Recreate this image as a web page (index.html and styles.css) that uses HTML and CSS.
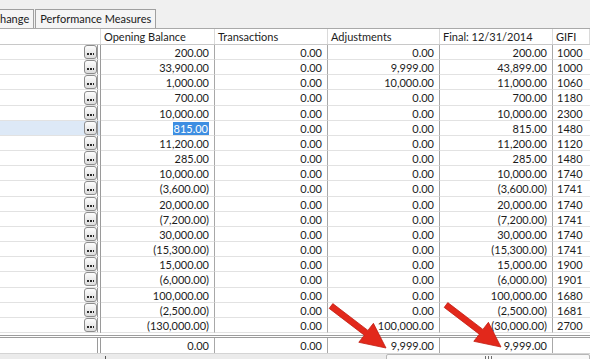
FILE: index.html
```html
<!DOCTYPE html>
<html lang="en">
<head>
    <meta charset="UTF-8" />
    <meta name="viewport" content="width=device-width, initial-scale=1.0" />
    <title>Trial Balance</title>
    <link rel="stylesheet" href="styles.css">
</head>
<body>
    <div class="window">
        <div class="tabs">
            <span class="tab tab-cut">hange</span>
            <span class="tab">Performance Measures</span>
        </div>

        <div class="grid-head">
            <div class="hcell"></div>
            <div class="hcell">Opening Balance</div>
            <div class="hcell">Transactions</div>
            <div class="hcell">Adjustments</div>
            <div class="hcell">Final: 12/31/2014</div>
            <div class="hcell">GIFI</div>
        </div>

        <div class="grid-body">
            <div class="row"><div class="cell first"><span class="dots"></span></div><div class="cell num">200.00</div><div class="cell num">0.00</div><div class="cell num">0.00</div><div class="cell num">200.00</div><div class="cell code">1000</div></div>
            <div class="row"><div class="cell first"><span class="dots"></span></div><div class="cell num">33,900.00</div><div class="cell num">0.00</div><div class="cell num">9,999.00</div><div class="cell num">43,899.00</div><div class="cell code">1000</div></div>
            <div class="row"><div class="cell first"><span class="dots"></span></div><div class="cell num">1,000.00</div><div class="cell num">0.00</div><div class="cell num">10,000.00</div><div class="cell num">11,000.00</div><div class="cell code">1060</div></div>
            <div class="row"><div class="cell first"><span class="dots"></span></div><div class="cell num">700.00</div><div class="cell num">0.00</div><div class="cell num">0.00</div><div class="cell num">700.00</div><div class="cell code">1180</div></div>
            <div class="row"><div class="cell first"><span class="dots"></span></div><div class="cell num">10,000.00</div><div class="cell num">0.00</div><div class="cell num">0.00</div><div class="cell num">10,000.00</div><div class="cell code">2300</div></div>
            <div class="row current"><div class="cell first"><span class="dots"></span></div><div class="cell num"><span class="selected">815.00</span></div><div class="cell num">0.00</div><div class="cell num">0.00</div><div class="cell num">815.00</div><div class="cell code">1480</div></div>
            <div class="row"><div class="cell first"><span class="dots"></span></div><div class="cell num">11,200.00</div><div class="cell num">0.00</div><div class="cell num">0.00</div><div class="cell num">11,200.00</div><div class="cell code">1120</div></div>
            <div class="row"><div class="cell first"><span class="dots"></span></div><div class="cell num">285.00</div><div class="cell num">0.00</div><div class="cell num">0.00</div><div class="cell num">285.00</div><div class="cell code">1480</div></div>
            <div class="row"><div class="cell first"><span class="dots"></span></div><div class="cell num">10,000.00</div><div class="cell num">0.00</div><div class="cell num">0.00</div><div class="cell num">10,000.00</div><div class="cell code">1740</div></div>
            <div class="row"><div class="cell first"><span class="dots"></span></div><div class="cell num">(3,600.00)</div><div class="cell num">0.00</div><div class="cell num">0.00</div><div class="cell num">(3,600.00)</div><div class="cell code">1741</div></div>
            <div class="row"><div class="cell first"><span class="dots"></span></div><div class="cell num">20,000.00</div><div class="cell num">0.00</div><div class="cell num">0.00</div><div class="cell num">20,000.00</div><div class="cell code">1740</div></div>
            <div class="row"><div class="cell first"><span class="dots"></span></div><div class="cell num">(7,200.00)</div><div class="cell num">0.00</div><div class="cell num">0.00</div><div class="cell num">(7,200.00)</div><div class="cell code">1741</div></div>
            <div class="row"><div class="cell first"><span class="dots"></span></div><div class="cell num">30,000.00</div><div class="cell num">0.00</div><div class="cell num">0.00</div><div class="cell num">30,000.00</div><div class="cell code">1740</div></div>
            <div class="row"><div class="cell first"><span class="dots"></span></div><div class="cell num">(15,300.00)</div><div class="cell num">0.00</div><div class="cell num">0.00</div><div class="cell num">(15,300.00)</div><div class="cell code">1741</div></div>
            <div class="row"><div class="cell first"><span class="dots"></span></div><div class="cell num">15,000.00</div><div class="cell num">0.00</div><div class="cell num">0.00</div><div class="cell num">15,000.00</div><div class="cell code">1900</div></div>
            <div class="row"><div class="cell first"><span class="dots"></span></div><div class="cell num">(6,000.00)</div><div class="cell num">0.00</div><div class="cell num">0.00</div><div class="cell num">(6,000.00)</div><div class="cell code">1901</div></div>
            <div class="row"><div class="cell first"><span class="dots"></span></div><div class="cell num">100,000.00</div><div class="cell num">0.00</div><div class="cell num">0.00</div><div class="cell num">100,000.00</div><div class="cell code">1680</div></div>
            <div class="row"><div class="cell first"><span class="dots"></span></div><div class="cell num">(2,500.00)</div><div class="cell num">0.00</div><div class="cell num">0.00</div><div class="cell num">(2,500.00)</div><div class="cell code">1681</div></div>
            <div class="row"><div class="cell first"><span class="dots"></span></div><div class="cell num">(130,000.00)</div><div class="cell num">0.00</div><div class="cell num">100,000.00</div><div class="cell num">(30,000.00)</div><div class="cell code">2700</div></div>
        </div>

        <div class="row total">
            <div class="cell first"></div>
            <div class="cell num">0.00</div>
            <div class="cell num">0.00</div>
            <div class="cell num">9,999.00</div>
            <div class="cell num">9,999.00</div>
            <div class="cell code"></div>
        </div>

        <div class="hscroll">
            <span class="tick"></span>
            <span class="thumb"><span class="grip"></span></span>
        </div>

        <svg class="arrows" width="590" height="359" viewBox="0 0 590 359">
            <g fill="#e2281b" stroke="#c21d12" stroke-width="0.8" stroke-linejoin="round">
                <polygon points="332.8,303.6 367.9,330.4 373.4,323.3 386,348 358.8,342.3 364.3,335.2 329.2,308.4" />
                <polygon points="332.8,303.6 367.9,330.4 373.4,323.3 386,348 358.8,342.3 364.3,335.2 329.2,308.4" transform="translate(115 -1)" />
            </g>
        </svg>
    </div>
</body>
</html>
```

FILE: styles.css
```css
body {
    margin: 0;
    padding: 0;
    font-family: Lato, "Liberation Sans", sans-serif;
    font-size: 11px;
    color: #1c1c1c;
    background-color: #ffffff;
}

.window {
    position: relative;
    width: 590px;
    height: 359px;
    overflow: hidden;
}

/* tab strip */
.tabs {
    display: flex;
    align-items: flex-end;
    height: 29px;
    box-sizing: border-box;
    background-color: #f0f0f0;
    border-bottom: 1px solid #a9a9a9;
}

.tab {
    height: 19px;
    line-height: 18px;
    padding: 0 4px;
    box-sizing: border-box;
    border: 1px solid #a0a0a0;
    border-bottom: none;
    background-color: #f5f5f5;
    color: #202020;
    white-space: nowrap;
}

.tab-cut {
    padding-left: 0;
    border-left: none;
    margin-right: 1px;
}

/* grid */
.grid-head,
.row {
    display: grid;
    grid-template-columns: 101px 114px 113px 112px 113px 1fr;
}

.grid-head {
    height: 16px;
    box-sizing: border-box;
    border-bottom: 1px solid #c8c8c8;
}

.hcell {
    padding-left: 3px;
    line-height: 15px;
    border-right: 1px solid #dadada;
    white-space: nowrap;
    overflow: hidden;
}

.row {
    height: 15.17px;
}

.cell {
    box-sizing: border-box;
    border-right: 1px solid #a8a8a8;
    border-bottom: 1px solid #e2e2e2;
    line-height: 15px;
    white-space: nowrap;
    overflow: hidden;
}

.cell.num {
    text-align: right;
    padding-right: 5px;
}

.cell.code {
    padding-left: 4px;
    border-right: none;
}

.cell.first {
    display: flex;
    justify-content: flex-end;
    align-items: center;
    border-right: 4px double #9a9a9a;
}

.current .cell.first {
    background-color: #dde9f7;
}

.selected {
    background-color: #3d8ee2;
    color: #ffffff;
    padding: 0 1px;
}

/* the "..." lookup button */
.dots {
    display: flex;
    justify-content: center;
    align-items: flex-end;
    width: 13px;
    height: 14px;
    padding-bottom: 3px;
    box-sizing: border-box;
    border: 1px solid #8c8c8c;
    border-radius: 3px;
    background: linear-gradient(#fdfdfd, #dcdcdc);
}

.dots::after {
    content: "";
    width: 7px;
    height: 2px;
    background: repeating-linear-gradient(90deg, #2a2a2a 0 2px, transparent 2px 3px);
}

/* totals */
.total {
    height: 18px;
    margin-top: 2px;
    box-sizing: border-box;
    border-top: 3px double #9c9c9c;
}

.total .cell {
    border-bottom: none;
}

/* horizontal scroll bar */
.hscroll {
    display: flex;
    align-items: stretch;
    height: 17px;
    box-sizing: border-box;
    background-color: #ebebeb;
    border-top: 1px solid #d4d4d4;
}

.tick {
    width: 1px;
    height: 3px;
    margin-left: 105px;
    margin-top: 2px;
    background-color: #555555;
}

.thumb {
    display: flex;
    justify-content: center;
    margin-left: 280px;
    flex: 1;
    background-color: #f8f8f8;
    border: 1px solid #b7b7b7;
    border-radius: 2px;
}

.grip {
    width: 7px;
    height: 4px;
    margin-top: 1px;
    background: repeating-linear-gradient(90deg, #6d6d6d 0 1px, transparent 1px 3px);
}

.arrows {
    position: absolute;
    top: 0;
    left: 0;
    pointer-events: none;
}
```
